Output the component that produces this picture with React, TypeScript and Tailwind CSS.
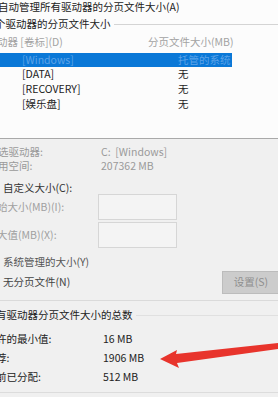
export default function App() {
  const totals = [
    { label: '许的最小值:', value: '16 MB' },
    { label: '荐:', value: '1906 MB' },
    { label: '前已分配:', value: '512 MB' },
  ]
  const drives = [
    { name: '[DATA]', size: '无' },
    { name: '[RECOVERY]', size: '无' },
    { name: '[娱乐盘]', size: '无' },
  ]

  return (
    <div
      className="relative w-[278px] h-[397px] overflow-hidden bg-[#f0f0f0] text-[10.5px] text-[#222] leading-none"
      style={{ fontFamily: '"Noto Sans CJK SC", "Noto Sans", sans-serif' }}
    >
      {/* Top: auto manage + drive list */}
      <div className="h-[139px] bg-[#fcfcfc] border-b border-[#a9a9a9] flex flex-col">
        <div className="h-[14px] flex items-center -ml-[2px]">自动管理所有驱动器的分页文件大小(A)</div>

        <div className="h-[21px] flex items-center">
          <span className="-ml-[5px] whitespace-nowrap">个驱动器的分页文件大小</span>
          <div className="flex-1 ml-[3px] border-t border-[#d4d4d4]" />
        </div>

        <div className="h-[14px] flex items-center text-[#a3a3a3]">
          <span className="w-[148px] -ml-[3px] pl-0">动器 [卷标](D)</span>
          <span className="ml-[3px]">分页文件大小(MB)</span>
        </div>

        {/* selected row */}
        <div className="mt-[4px] h-[14px] w-[232px] bg-[#0a78d7] flex items-center text-[#5da3e8]">
          <span className="w-[178px] pl-[22px]">[Windows]</span>
          <span>托管的系统</span>
        </div>

        {drives.map((d) => (
          <div key={d.name} className="h-[15px] flex items-center">
            <span className="w-[178px] pl-[22px]">{d.name}</span>
            <span>{d.size}</span>
          </div>
        ))}
      </div>

      {/* Selected drive details */}
      <div className="flex flex-col">
        <div className="mt-[6px] h-[14px] flex items-center text-[#9a9a9a]">
          <span className="w-[101px] -ml-[2px]">选驱动器:</span>
          <span className="ml-[2px]">C:&nbsp; [Windows]</span>
        </div>
        <div className="h-[14px] flex items-center text-[#9a9a9a]">
          <span className="w-[101px] -ml-[2px]">用空间:</span>
          <span className="ml-[2px]">207362 MB</span>
        </div>

        <div className="mt-[9px] h-[12px] flex items-center pl-[3px] text-[#333]">自定义大小(C):</div>

        <div className="h-[26px] flex items-center text-[#a0a0a0]">
          <span className="w-[101px] -ml-[3px] pr-[3px]">始大小(MB)(I):</span>
          <div className="w-[79px] h-[26px] bg-[#f4f4f4] border border-[#d6d6d6]" />
        </div>
        <div className="mt-[2px] h-[26px] flex items-center text-[#a0a0a0]">
          <span className="w-[101px] -ml-[3px] pr-[3px]">大值(MB)(X):</span>
          <div className="w-[79px] h-[26px] bg-[#f4f4f4] border border-[#d6d6d6]" />
        </div>

        <div className="mt-[7px] h-[14px] flex items-center pl-[3px] text-[#555]">系统管理的大小(Y)</div>

        <div className="mt-[2px] h-[23px] flex items-center justify-between">
          <span className="pl-[3px] text-[#444]">无分页文件(N)</span>
          <div className="w-[58px] h-[23px] bg-[#cccccc] border border-[#bcbcbc] flex items-center justify-center text-[#8e8e8e] -mr-[2px]">
            设置(S)
          </div>
        </div>

        <div className="mt-[6px] border-t border-[#dadada]" />

        {/* Totals group */}
        <div className="mt-[7px] h-[14px] flex items-center">
          <span className="-ml-[4px] whitespace-nowrap">有驱动器分页文件大小的总数</span>
          <div className="flex-1 ml-[3px] border-t border-[#e0e0e0]" />
        </div>

        <div className="mt-[8px] flex flex-col">
          {totals.map((t) => (
            <div key={t.label} className="h-[19px] flex items-center">
              <span className="w-[103px] -ml-[4px]">{t.label}</span>
              <span className="ml-[4px]">{t.value}</span>
            </div>
          ))}
        </div>

        <div className="mt-[5px] border-t border-[#dcdcdc]" />
      </div>

      {/* red arrow annotation */}
      <svg className="absolute left-0 top-0" width="278" height="397" viewBox="0 0 278 397">
        <polygon
          points="160,359 177,350 176,354 278,343 278,349 177,363 179,368"
          fill="#e8342c"
        />
      </svg>
    </div>
  )
}
